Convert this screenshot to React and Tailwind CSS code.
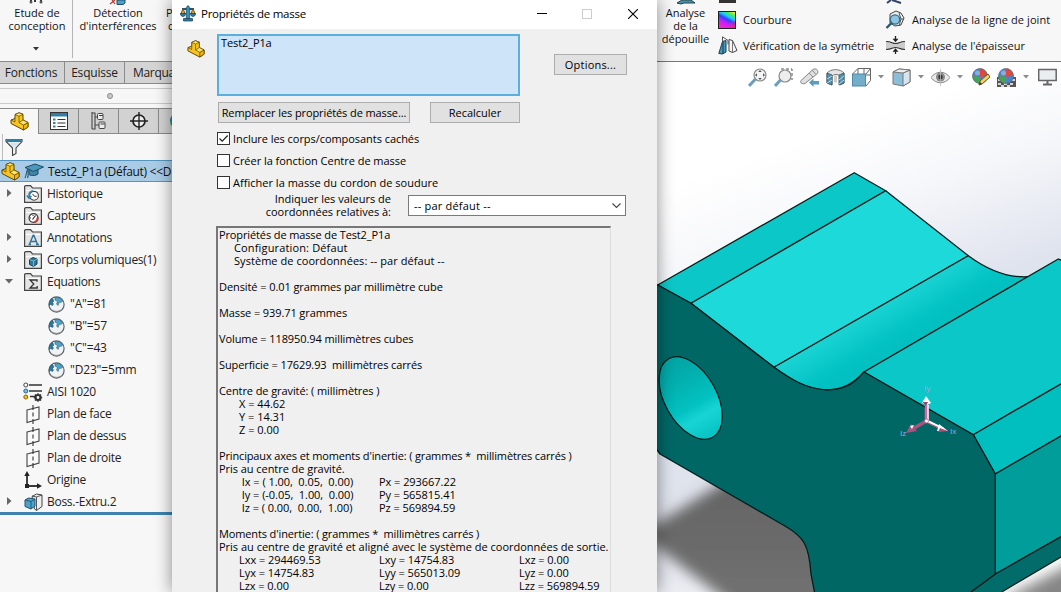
import React from "react";

const Part = ({ className = "w-[19px] h-[19px]" }) => (
  <svg viewBox="0 0 19 19" className={"shrink-0 " + className}>
    <g stroke="#5f4300" strokeWidth="1" strokeLinejoin="round">
      <path d="M1 8 5 6.500V2.500L9 .8l4 1.500V8l5 2.500V15L13.500 18 1 11.500Z" fill="#f6c524" />
      <path d="M13.500 13 18 10.500V15L13.500 18Z" fill="#f3b60c" strokeWidth=".8" />
      <path d="M5 2.500 9 .8l4 1.500L9 4.300Z" fill="#ffe36a" strokeWidth=".7" />
      <path d="M9 10.500 13 8l5 2.500L13.500 13Z" fill="#ffe36a" strokeWidth=".7" />
      <path d="M9 4.300V10.500M1 8l4 2V6.500" fill="none" strokeWidth=".7" />
    </g>
  </svg>
);

const Cap = () => (
  <svg viewBox="0 0 20 18" className="h-[18px] w-[20px]">
    <path d="M5 7v5c0 2 7 2 9 0V7Z" fill="#3f86a8" stroke="#1d4b66" />
    <path d="M1 5.500 11 2l8.500 3L9.500 9.500Z" fill="#4b98bd" stroke="#1d4b66" />
    <path d="M4 7c-2 2-1 5-3 9M4 8c0 3 1 5-.5 8" fill="none" stroke="#2d5f7c" strokeWidth="1.200" />
  </svg>
);

const Folder = ({ children }) => (
  <svg viewBox="0 0 18 18" className="h-[18px] w-[18px]">
    <path d="M.6 17V1.800C.6 1 1 .6 2 .6h4.500L8.500 3H17.400V17.400H.6Z" fill="#e4e4e4" stroke="#444" strokeWidth="1.200" />
    <path d="M2 5.500h14" stroke="#fff" />
    {children}
  </svg>
);

const icons = {
  history: (
    <Folder>
      <circle cx="10" cy="10.800" r="4.400" fill="#fff" stroke="#444" strokeWidth="1.100" />
      <path d="M8.500 9l2 2.300h2.200" fill="none" stroke="#333" />
      <path d="M9 5.800C5.500 6.500 4.500 9 5 12M2.800 10.500l2.300 3 2.400-2.500" fill="none" stroke="#2d82ad" strokeWidth="1.400" />
    </Folder>
  ),
  sensor: (
    <Folder>
      <circle cx="9.500" cy="11" r="4.400" fill="#fff" stroke="#333" strokeWidth="1.200" />
      <path d="M13.500 10.500a4 4 0 0 1-3 4.500" fill="none" stroke="#d6342b" strokeWidth="2.200" />
      <path d="m8.500 12.500 3-4" stroke="#333" strokeWidth="1.200" />
      <path d="M6 11h1M9 8v1" stroke="#333" />
    </Folder>
  ),
  note: (
    <Folder>
      <path d="m5.500 15.300 3.700-9h.6l3.700 9M6.800 12.500h5.300M4.500 15.500h2.500M12 15.500h3" fill="none" stroke="#2f7396" strokeWidth="1.400" />
    </Folder>
  ),
  bodies: (
    <Folder>
      <path d="m9 6.500 4 1.500v5L9.500 15.500l-4-2V8.500Z" fill="#2c789c" stroke="#16445c" />
      <path d="m5.500 8.500 4 1.500L13 8M9.500 10v5.500" fill="none" stroke="#8cc7e2" strokeWidth=".8" />
    </Folder>
  ),
  sigma: (
    <Folder>
      <path d="M13 8.800V7H6l3.800 4L6 15h7.200v-2" fill="none" stroke="#333" strokeWidth="1.300" />
    </Folder>
  ),
  globe: (
    <svg viewBox="0 0 17 17" className="h-[17px] w-[17px]">
      <circle cx="8.500" cy="8.500" r="7.600" fill="#f0f2f3" stroke="#5c646a" strokeWidth="1.200" />
      <path d="M1.200 7C1.800 4.500 3 3 4.500 2.500L6 5 4.500 6.500 5.500 8 4.500 9.500 2.500 8.500 1.300 9.500Z" fill="#2878a0" stroke="#1d4f6b" strokeWidth=".5" />
      <path d="M7 1.500 11.500 1.800l3.300 3.200-1.800 1.500-1.500-.5-1.500 3.500L8.500 8l1-2.500L7 4Z" fill="#4fa5cd" stroke="#1d4f6b" strokeWidth=".5" />
      <path d="M3.500 13.500c2.500 2.500 7.500 2.500 10 0" fill="none" stroke="#888" />
    </svg>
  ),
  material: (
    <svg viewBox="0 0 20 20" className="h-[20px] w-[20px]">
      <path d="M6 3h13M6 9h13M7 14.500h6" stroke="#333" strokeWidth="1.300" />
      <circle cx="2.800" cy="3" r="2" fill="#fff" stroke="#444" />
      <circle cx="2.800" cy="9" r="2" fill="#78c1ec" stroke="#27688c" />
      <circle cx="2.800" cy="15" r="2" fill="#f4c521" stroke="#876500" />
      <circle cx="15" cy="15.500" r="2.500" fill="none" stroke="#333" strokeWidth="2.200" />
      <path d="M15 11.300v1.500M15 18.200v1.500M10.800 15.500h1.500M17.700 15.500h1.500M12 12.500l1 1M17 17.500l1 1M18 12.500l-1 1M13 17.500l-1 1" stroke="#333" strokeWidth="1.400" />
    </svg>
  ),
  plane: (
    <svg viewBox="0 0 14 19" className="h-[19px] w-[14px]">
      <path d="M1 5 13 2v12L1 17.500Z" fill="#fafafa" stroke="#444" strokeWidth="1.100" />
      <path d="M7 0v5M7 7.500v4M7 14v5" stroke="#333" strokeWidth="1.100" />
    </svg>
  ),
  origin: (
    <svg viewBox="0 0 18 18" className="h-[18px] w-[18px]">
      <path d="M3 3v12h12" fill="none" stroke="#3a3a3a" strokeWidth="1.900" />
      <path d="M3 0 5.700 5H.3ZM18 15l-5-2.700v5.400Z" fill="#222" />
      <rect x="1" y="13" width="4" height="4" fill="#222" />
    </svg>
  ),
  extrude: (
    <svg viewBox="0 0 19 18" className="h-[18px] w-[19px]">
      <path d="M8 3.500 12.500 1 18 2v11.500l-5.500 4-2-1.500Z" fill="#eee" stroke="#444" />
      <path d="M12.500 4v13M12.500 4 18 2M12.500 4 8 3" fill="none" stroke="#444" strokeWidth=".9" />
      <path d="M1 7 4.500 5 11 6v7l-4 3-6-2.500Z" fill="#4fa1c8" stroke="#1c5472" />
      <path d="m1 7 6 1.500L11 6M7 8.500V16" fill="none" stroke="#1c5472" strokeWidth=".9" />
    </svg>
  ),
};

const tree = [
  { icon: "history", text: "Historique", arrow: "r" },
  { icon: "sensor", text: "Capteurs" },
  { icon: "note", text: "Annotations", arrow: "r" },
  { icon: "bodies", text: "Corps volumiques(1)", arrow: "r" },
  { icon: "sigma", text: "Equations", arrow: "d" },
  { icon: "globe", text: '"A"=81', deep: true },
  { icon: "globe", text: '"B"=57', deep: true },
  { icon: "globe", text: '"C"=43', deep: true },
  { icon: "globe", text: '"D23"=5mm', deep: true },
  { icon: "material", text: "AISI 1020" },
  { icon: "plane", text: "Plan de face" },
  { icon: "plane", text: "Plan de dessus" },
  { icon: "plane", text: "Plan de droite" },
  { icon: "origin", text: "Origine" },
  { icon: "extrude", text: "Boss.-Extru.2", arrow: "r" },
];

function TreeRow({ icon, text, arrow, deep }) {
  return (
    <div className="flex h-[22px] shrink-0 items-center">
      <div className="flex w-[22px] shrink-0 items-center pb-[3px] pl-[5px]">
        {arrow && (
          <svg viewBox="0 0 8 8" className="h-2 w-2">
            <path d={arrow === "r" ? "M2 0l4.500 4L2 8Z" : "M0 2h8L4 6.500Z"} fill="#666" />
          </svg>
        )}
      </div>
      <div className={deep ? "ml-6 flex w-5 shrink-0 justify-center" : "flex w-[22px] shrink-0 justify-center"}>{icons[icon]}</div>
      <span className={deep ? "ml-1 whitespace-pre tracking-[-0.15px]" : "ml-[3px] whitespace-pre"}>{text}</span>
    </div>
  );
}

function LeftPanel() {
  return (
    <div className="flex w-[172px] shrink-0 flex-col bg-[#f7f7f7]">
      <div className="flex h-[61px] shrink-0 text-center text-[11px] leading-[13px] text-[#111]">
        <div className="flex h-[58px] w-[73px] shrink-0 flex-col items-center border-r border-[#b5b5b5]">
          <svg viewBox="0 0 16 6" className="h-[6px] w-[16px]">
            <path d="M3 0v3M7 0v2M13 0v3" stroke="#333" strokeWidth="2" />
            <circle cx="3" cy="2" r="1.500" fill="#555" /><circle cx="13" cy="2" r="1.500" fill="#555" />
          </svg>
          <div className="pl-[2px]">Etude de</div>
          <div className="pl-[2px]">conception</div>
          <svg viewBox="0 0 6 4" className="mt-[15px] h-1 w-[6px]"><path d="M0 0h6L3 3.500Z" fill="#333" /></svg>
        </div>
        <div className="flex w-[90px] shrink-0 flex-col items-center">
          <svg viewBox="0 0 18 6" className="h-[6px] w-[18px]">
            <path d="m1 4 5-4M3 0l3 4" stroke="#b3392b" strokeWidth="1.200" />
            <path d="M8 0h8v3l-2 1.500H8Z" fill="#4da0c6" stroke="#1c4f6b" />
          </svg>
          <div>Détection</div>
          <div className="whitespace-nowrap">d'interférences</div>
        </div>
        <div className="ml-[3px] pt-[6px] text-left"><div>P</div><div className="pl-[2px]">c</div></div>
      </div>
      <div className="flex h-[23px] shrink-0 border-y border-[#8a8a8a] bg-[#d4d4d4] text-[12px] leading-[21px] tracking-[-0.2px] text-[#222]">
        <div className="w-[65px] shrink-0 border-r border-[#8a8a8a] pr-[2px] text-center">Fonctions</div>
        <div className="w-[60px] shrink-0 border-r border-[#8a8a8a] text-center">Esquisse</div>
        <div className="pl-[8px] tracking-[-0.3px]">Marqua</div>
      </div>
      <div className="mt-1 flex h-4 shrink-0 items-center border-y border-[#cbcbcb] pl-[107px]">
        <div className="h-[6px] w-[6px] rounded-full border border-[#888] bg-[#ccc]" />
      </div>
      <div className="mt-1 flex h-[26px] shrink-0 overflow-hidden border-t border-[#8a8a8a] bg-[#d2d2d2]">
        <div className="flex w-[38px] shrink-0 items-center justify-center bg-[#f7f7f7]"><Part /></div>
        <div className="flex w-[41px] shrink-0 items-center justify-center border-x border-b border-[#8a8a8a]">
          <svg viewBox="0 0 18 18" className="h-[18px] w-[18px]">
            <rect x=".5" y=".5" width="17" height="17" fill="#fff" stroke="#333" />
            <rect x="1" y="1" width="16" height="3.500" fill="#327ea4" />
            <path d="M7.500 7.500h8M7.500 11h8M7.500 14.500h8" stroke="#333" strokeWidth="1.200" />
            <path d="M3 7.500h2.500M3 11h2.500M3 14.500h2.500" stroke="#327ea4" strokeWidth="2" />
          </svg>
        </div>
        <div className="flex w-[40px] shrink-0 items-center justify-center border-r border-b border-[#8a8a8a]">
          <svg viewBox="0 0 15 18" className="h-[18px] w-[15px]">
            <path d="M1 0v17M1 1h3v16H1M4 5h3M4 13h4" fill="none" stroke="#444" strokeWidth="1.100" />
            <rect x="6.500" y="1.500" width="5.500" height="6" rx="1" fill="#eee" stroke="#444" />
            <rect x="8" y="10" width="6" height="6.500" rx="1" fill="#eee" stroke="#444" />
            <path d="M8 3.500h4M9.500 12h4" stroke="#444" />
          </svg>
        </div>
        <div className="flex w-[40px] shrink-0 items-center justify-center border-r border-b border-[#8a8a8a]">
          <svg viewBox="0 0 18 18" className="h-[18px] w-[18px]">
            <circle cx="9" cy="9" r="6" fill="#eee" stroke="#222" strokeWidth="1.700" />
            <path d="M9 0v18M0 9h18" stroke="#222" strokeWidth="1.400" />
          </svg>
        </div>
        <div className="flex w-[40px] shrink-0 items-center border-b border-[#8a8a8a] pl-[11px]">
          <svg viewBox="0 0 16 16" className="h-4 w-4 shrink-0"><circle cx="8" cy="8" r="8" fill="#2e9a62" /><path d="M0 8a8 8 0 0 1 8-8v8Z" fill="#2d7fa5" /></svg>
        </div>
      </div>
      <div className="ml-[2px] flex h-[26px] shrink-0 items-center border-l border-[#bbb] pl-[2px]">
        <svg viewBox="0 0 18 18" className="h-[18px] w-[18px]">
          <path d="M1 1.500h16v2L11 10v5.500L7.500 17.500V10L1 3.500Z" fill="#f2f2f2" stroke="#444" strokeWidth="1.100" />
          <path d="M1.500 1h15v3h-15Z" fill="#2b7ea6" />
          <path d="m3 4.500 6 5 6-5" fill="#cfe5ef" />
        </svg>
      </div>
      <div className="flex h-[22px] shrink-0 items-center border-y border-[#5596c0] bg-[#a9cbe6] pl-[1px] text-[12px] text-[#111]">
        <Part />
        <div className="ml-1 shrink-0"><Cap /></div>
        <span className="ml-[4px] pt-[1px] whitespace-pre tracking-[-0.3px]">{"Test2_P1a (Défaut) <<D"}</span>
      </div>
      <div className="flex h-[330px] shrink-0 flex-col pt-[1px] text-[12px] tracking-[-0.28px] text-[#222]">
        {tree.map((r, i) => <TreeRow key={i} {...r} />)}
      </div>
      <div className="h-[3px] shrink-0 bg-[#3d83ae]" />
    </div>
  );
}

const Line = ({ children, className = "" }) => <div className={"h-[13px] whitespace-pre " + className}>{children}</div>;

function Inertia({ rows }) {
  return rows.map((r, i) => (
    <div key={i} className="grid h-[13px] grid-cols-[140px_140px_100px] whitespace-pre pl-5 tracking-[-0.05px]">
      {r.map((c, j) => <span key={j}>{c}</span>)}
    </div>
  ));
}

function Check({ label, checked, className }) {
  return (
    <div className="flex h-[22px] items-center">
      <div className="mr-[3px] h-[13px] w-[13px] shrink-0 border border-[#333] bg-white">
        {checked && <svg viewBox="0 0 11 11" className="h-[11px] w-[11px]"><path d="m1.500 5.500 2.700 2.700L9.700 2.500" fill="none" stroke="#222" strokeWidth="1.200" /></svg>}
      </div>
      <span className={"whitespace-nowrap " + className}>{label}</span>
    </div>
  );
}

const buttonBox = "flex h-[21px] items-center justify-center border border-[#adadad] bg-[#e1e1e1] whitespace-nowrap";

function Dialog() {
  return (
    <div className="relative z-10 flex w-[485px] shrink-0 flex-col bg-[#f0f0f0] text-[11px] leading-[13px] text-black shadow-[0_0_16px_rgba(0,0,0,0.45)]">
      <div className="flex h-[29px] shrink-0 items-center bg-white pb-[2px] pl-[8px]">
        <svg viewBox="0 0 16 17" className="mr-[5px] h-[17px] w-4">
          <path d="M8 1v13M2 4h12" stroke="#205a7a" strokeWidth="2" />
          <path d="M3 3.500.8 9h4.400ZM13 3.500l-2.200 5.500h4.400Z" fill="#d9a93c" stroke="#604b16" strokeWidth=".9" />
          <path d="M6.300 2.500 8 .5l1.700 2v11H6.300Z" fill="#3f8db2" stroke="#1d506c" strokeWidth=".8" />
          <path d="M.3 8.500h5.400c-.3 4-5.100 4-5.400 0ZM10.300 8.500h5.400c-.3 4-5.100 4-5.400 0ZM3.500 13.500h9V16h-9Z" fill="#2f789d" stroke="#173f54" strokeWidth=".7" />
        </svg>
        <span className="text-[11.5px] tracking-[-0.25px]">Propriétés de masse</span>
        <div className="ml-auto flex items-center pr-[19px]">
          <div className="h-px w-[10px] bg-black" />
          <div className="ml-[35px] h-[10px] w-[10px] border border-[#ccc]" />
          <svg viewBox="0 0 10 10" className="ml-[36px] h-[10px] w-[10px]"><path d="m0 0 10 10M10 0 0 10" stroke="#000" strokeWidth="1.100" /></svg>
        </div>
      </div>
      <div className="flex h-[67px] shrink-0">
        <div className="flex w-[45px] shrink-0 justify-end pt-[11px] pr-[12px]"><Part className="h-[18px] w-[18px]" /></div>
        <div className="mt-[5px] h-[62px] w-[303px] shrink-0 border-2 border-[#5aafdf] bg-[#cee4f8] pl-[2px]"><span className="tracking-[-0.1px]">Test2_P1a</span></div>
        <div className="mt-[25px] ml-[34px] h-[21px]"><div className={buttonBox + " w-[73px] tracking-[0.2px]"}>Options...</div></div>
      </div>
      <div className="mt-[6px] ml-[46px] flex shrink-0">
        <div className={buttonBox + " w-[192px] tracking-[-0.1px]"}>Remplacer les propriétés de masse...</div>
        <div className={buttonBox + " ml-5 w-[90px]"}>Recalculer</div>
      </div>
      <div className="mt-[4px] mb-[1px] ml-[45px] flex h-[66px] shrink-0 flex-col">
        <Check label="Inclure les corps/composants cachés" checked className="tracking-[-0.05px]" />
        <Check label="Créer la fonction Centre de masse" className="tracking-[-0.03px]" />
        <Check label="Afficher la masse du cordon de soudure" className="tracking-[0.02px]" />
      </div>
      <div className="flex h-[32px] shrink-0">
        <div className="-mt-[2px] w-[219px] shrink-0 text-right"><div>Indiquer les valeurs de</div><div>coordonnées relatives à:</div></div>
        <div className="mt-[1px] ml-[17px] flex h-[21px] w-[218px] items-center justify-between border border-[#7a7a7a] bg-white pr-[4px] pl-[5px]">
          <span className="tracking-[0.2px]">-- par défaut --</span>
          <svg viewBox="0 0 9 6" className="h-[6px] w-[9px]"><path d="m.5.5 4 4 4-4" fill="none" stroke="#444" strokeWidth="1.100" /></svg>
        </div>
      </div>
      <div className="ml-[44px] h-[400px] w-[395px] shrink-0 overflow-hidden border-t-2 border-r border-l-2 border-t-[#777] border-r-[#ddd] border-l-[#777] pl-[1px]">
        <Line className="tracking-[-0.12px]">Propriétés de masse de Test2_P1a</Line>
        <Line className="pl-[15px] tracking-[0.15px]">Configuration: Défaut</Line>
        <Line className="pl-[15px] tracking-[0.05px]">Système de coordonnées: -- par défaut --</Line>
        <Line />
        <Line className="tracking-[-0.08px]">Densité = 0.01 grammes par millimètre cube</Line>
        <Line />
        <Line className="tracking-[-0.1px]">Masse = 939.71 grammes</Line>
        <Line />
        <Line className="tracking-[-0.09px]">Volume = 118950.94 millimètres cubes</Line>
        <Line />
        <Line className="tracking-[-0.11px]">{"Superficie = 17629.93  millimètres carrés"}</Line>
        <Line />
        <Line className="tracking-[-0.09px]">Centre de gravité: ( millimètres )</Line>
        <Line className="pl-5">X = 44.62</Line>
        <Line className="pl-5">Y = 14.31</Line>
        <Line className="pl-5">Z = 0.00</Line>
        <Line />
        <Line className="tracking-[-0.15px]">{"Principaux axes et moments d'inertie: ( grammes *  millimètres carrés )"}</Line>
        <Line className="tracking-[-0.05px]">Pris au centre de gravité.</Line>
        <Inertia rows={[
          [" Ix = ( 1.00,  0.05,  0.00)", "Px = 293667.22"],
          [" Iy = (-0.05,  1.00,  0.00)", "Py = 565815.41"],
          [" Iz = ( 0.00,  0.00,  1.00)", "Pz = 569894.59"],
        ]} />
        <Line />
        <Line className="tracking-[-0.13px]">{"Moments d'inertie: ( grammes *  millimètres carrés )"}</Line>
        <Line className="tracking-[-0.01px]">Pris au centre de gravité et aligné avec le système de coordonnées de sortie.</Line>
        <Inertia rows={[
          ["Lxx = 294469.53", "Lxy = 14754.83", "Lxz = 0.00"],
          ["Lyx = 14754.83", "Lyy = 565013.09", "Lyz = 0.00"],
          ["Lzx = 0.00", "Lzy = 0.00", "Lzz = 569894.59"],
        ]} />
      </div>
    </div>
  );
}

const Tool = ({ children }) => (
  <div className="flex w-[26px] shrink-0 items-center justify-center">
    <svg viewBox="0 0 19 19" className="h-[19px] w-[19px]">{children}</svg>
  </div>
);

const Drop = () => (
  <div className="flex w-[13px] shrink-0 items-center justify-center">
    <svg viewBox="0 0 6 4" className="h-1 w-[6px]"><path d="M0 0h6L3 3.500Z" fill="#8c8c8c" /></svg>
  </div>
);

const Ball = () => (
  <g>
    <circle cx="9" cy="8" r="7.500" fill="#4b83c9" />
    <path d="M9 .5A7.500 7.500 0 0 1 16.500 8L9 9Z" fill="#dd4a3c" />
    <path d="M1.500 8 9 9v6.500A7.500 7.500 0 0 1 1.500 8Z" fill="#44a64b" />
    <path d="m9 9 7.500-1A7.500 7.500 0 0 1 9 15.500Z" fill="#4b83c9" />
    <circle cx="6.500" cy="5" r="2.500" fill="#fff" opacity=".35" />
    <circle cx="9" cy="8" r="7.500" fill="none" stroke="#667" strokeWidth=".7" />
  </g>
);

function Ribbon() {
  return (
    <div className="flex h-[62px] shrink-0 border-b border-[#777] bg-[#f7f7f7] text-[11px] leading-[13px] text-[#111]">
      <div className="flex w-[58px] shrink-0 flex-col items-center pr-[1px] text-center">
        <svg viewBox="0 0 20 6" className="h-[6px] w-5"><path d="M1 3 6 0h9l4 3H8L5 4Z" fill="#4b8fae" stroke="#244" /></svg>
        <div>Analyse<br />de la<br />dépouille</div>
      </div>
      <div className="flex w-[169px] shrink-0 flex-col pl-[3px]">
        <div className="h-[6px] shrink-0 pl-[1px]"><div className="h-[3px] w-[17px] bg-[#333]" /></div>
        <div className="flex h-[26px] items-center">
          <svg viewBox="0 0 18 18" className="mt-[1px] h-[18px] w-[18px]">
            <defs>
              <linearGradient id="rainbow" x1="0.850" y1="0" x2="0.300" y2="1">
                <stop offset="0" stopColor="#f4e040" /><stop offset=".18" stopColor="#40ee60" /><stop offset=".34" stopColor="#20c8ff" />
                <stop offset=".5" stopColor="#3040ff" /><stop offset=".68" stopColor="#c020ff" /><stop offset="1" stopColor="#ff20d0" />
              </linearGradient>
              <radialGradient id="rainbowCorner" cx="1" cy="1" r=".55">
                <stop offset="0" stopColor="#ff2040" /><stop offset="1" stopColor="#ff20a0" stopOpacity="0" />
              </radialGradient>
            </defs>
            <rect x=".5" y=".5" width="17" height="17" fill="url(#rainbow)" />
            <rect x=".5" y=".5" width="17" height="17" fill="url(#rainbowCorner)" stroke="#222" />
          </svg>
          <span className="ml-[7px]">Courbure</span>
        </div>
        <div className="flex h-[26px] items-center">
          <svg viewBox="0 0 20 19" className="h-[19px] w-5">
            <path d="M4.500 5.500V.8L10 4.500v4" fill="none" stroke="#555" />
            <path d="m.8 17.500 3.700-12L8 4.500V16l-3.500 2Z" fill="#4796bb" stroke="#173f56" />
            <path d="M5 6v12" stroke="#173f56" />
            <path d="m19 14.500-4.500-10-3.500-1V15l3.500 1.500Z" fill="#f7f7f7" stroke="#444" />
            <path d="M14.500 4.500v12" stroke="#666" strokeWidth=".9" />
          </svg>
          <span className="ml-[5px] whitespace-nowrap tracking-[-0.06px]">Vérification de la symétrie</span>
        </div>
      </div>
      <div className="flex w-[177px] shrink-0 flex-col">
        <div className="h-[6px] shrink-0 pl-[2px]"><svg viewBox="0 0 18 5" className="h-[5px] w-[18px]"><path d="M1 3 5 0M6 0l9 3" stroke="#346" strokeWidth="2" /></svg></div>
        <div className="flex h-[26px] items-center pl-[1px]">
          <svg viewBox="0 0 20 19" className="h-[19px] w-5">
            <path d="m5 4 6-3 5 2 3 5-3 7-6 1-5-3Z" fill="#eee" stroke="#444" />
            <path d="m14 3 2 6-2 7M16 9h3" fill="none" stroke="#555" />
            <circle cx="10" cy="9.500" r="4.700" fill="#8cc5e2" stroke="#346a86" strokeWidth="1.300" />
            <path d="m6.500 13-5 5" stroke="#235a77" strokeWidth="2.400" />
          </svg>
          <span className="ml-[7px] whitespace-nowrap tracking-[0.09px]">Analyse de la ligne de joint</span>
        </div>
        <div className="flex h-[26px] items-center pl-[2px]">
          <svg viewBox="0 0 19 18" className="h-[18px] w-[19px]">
            <path d="M0 5.500c6 0 6 2 9.500 2s4-2 9.500-2v8c-6 0-6-2-9.500-2s-4 2-9.500 2Z" fill="#ccc" />
            <path d="M0 5.500c6 0 6 2 9.500 2s4-2 9.500-2M0 13.500c6 0 6-2 9.500-2s4 2 9.500 2" fill="none" stroke="#333" strokeWidth="1.100" />
            <path d="M9.500 0v4M9.500 18v-4" stroke="#222" strokeWidth="1.300" />
            <path d="m6.500 2.800 3 3.500 3-3.500ZM6.500 15.700l3-3.500 3 3.500Z" fill="#222" />
          </svg>
          <span className="ml-[7px] whitespace-nowrap">Analyse de l'épaisseur</span>
        </div>
      </div>
    </div>
  );
}

function ViewTools() {
  return (
    <div className="flex h-[30px] shrink-0 pl-[87px]">
      <Tool>
        <circle cx="12" cy="7" r="6" fill="#f5f5f5" stroke="#888" strokeWidth="1.200" />
        <path d="m7.500 11-6.500 7" stroke="#6d9fb8" strokeWidth="3" />
        <path d="M12 2l1.800 2h-3.600ZM12 12l1.800-2h-3.600ZM7 7l2-1.800v3.600ZM17 7l-2-1.800v3.600Z" fill="#555" />
      </Tool>
      <Tool>
        <path d="M7 1h11v11" fill="none" stroke="#555" strokeDasharray="3 2" />
        <circle cx="11" cy="8" r="6" fill="#eee" stroke="#888" strokeWidth="1.200" />
        <path d="m6.500 12-5.500 6" stroke="#6d9fb8" strokeWidth="3" />
      </Tool>
      <Tool>
        <path d="m1 12.500 12-11c3-2 6 1 4.500 4L5 15.500c-3 1-5.500-1-4-3Z" fill="#e0e0e0" stroke="#888" />
        <path d="m9 5 4 4M12 2l4 4.500" stroke="#888" /><path d="M9 14.500 13.500 10.500v2.500H19v3.500h-5.500v2.500Z" fill="#5c9cbd" />
      </Tool>
      <Tool>
        <path d="M1 5c4-4.500 13-4.500 17 0v10l-4 2V8c-2-2-6-2-8 0v9l-5-2Z" fill="#e5e5e5" stroke="#777" />
        <path d="M1 5l5 2v10l-5-2ZM13 7l5-2v10l-5 2Z" fill="#4f93b3" stroke="#47616d" />
        <path d="M8 7.500h3v7H8Z" fill="#ccc" />
        <path d="m1 11 5-3M1 15l5-3M13 12l5-4M13 16l5-4" stroke="#b8dce9" />
      </Tool>
      <Tool>
        <path d="M6 .5h12.500v12L14 18M.5 6 6 .5v12M14 6l4.500-5.500M12 .5v13M6 7h12" fill="none" stroke="#666" />
        <rect x=".5" y="6" width="13" height="12" fill="#75aeca" stroke="#4b8aab" />
      </Tool>
      <Drop /><div className="w-px shrink-0" />
      <Tool>
        <path d="m1 4 6-3 11 1v12l-7 4-10-2Z" fill="#8dbed7" stroke="#777" />
        <path d="m11 5 7-3v12l-7 4Z" fill="#d7e4eb" stroke="#777" />
        <path d="m1 4 10 1 7-3L7 1Z" fill="#eee" stroke="#777" />
      </Tool>
      <Drop />
      <Tool>
        <path d="M0 9.500c5-7 14-7 19 0-5 7-14 7-19 0Z" fill="#e9e9e9" stroke="#888" />
        <circle cx="9.500" cy="9" r="4.500" fill="#888" /><circle cx="9.500" cy="9" r="2.200" fill="#333" />
        <path d="M9.500 1v17" stroke="#bbb" strokeWidth=".8" />
      </Tool>
      <Drop /><div className="w-px shrink-0" />
      <Tool>
        <Ball />
        <path d="m8 17 1-4 8-7 2 3-8 7Z" fill="#f4d35e" stroke="#665530" /><path d="m8 17 1-3 2 2Z" fill="#333" />
      </Tool>
      <Tool>
        <path d="M0 9h19v10H0Z" fill="#555" /><path d="M1 16h3M7 16h3M13 16h3M4 18h3M10 18h3M1 12h3M15 12h3" stroke="#fff" strokeWidth="1.500" />
        <Ball />
      </Tool>
      <Drop /><div className="w-[2px] shrink-0" />
      <Tool>
        <rect x=".7" y="1.500" width="17.500" height="11" fill="#e9eef1" stroke="#666" strokeWidth="1.500" />
        <path d="M9.500 13v3M5 16.500h9" stroke="#666" strokeWidth="2" />
      </Tool>
    </div>
  );
}

function Model() {
  return (
    <svg viewBox="657 92 404 500" className="block h-[500px] w-[404px] shrink-0">
      <defs>
        <linearGradient id="groove" gradientUnits="userSpaceOnUse" x1="860" y1="316" x2="896" y2="376">
          <stop offset="0" stopColor="#1bd4d4" /><stop offset=".5" stopColor="#02c2c3" /><stop offset="1" stopColor="#02bcbc" />
        </linearGradient>
        <linearGradient id="bore" gradientUnits="userSpaceOnUse" x1="670" y1="362" x2="711" y2="434" gradientTransform="rotate(-60.600 690.700 398)">
          <stop offset="0" stopColor="#02a5a4" /><stop offset=".3" stopColor="#02b2b1" /><stop offset=".6" stopColor="#02c2c1" /><stop offset=".76" stopColor="#18d5d4" /><stop offset="1" stopColor="#08c4c4" />
        </linearGradient>
        <linearGradient id="floor" x1="0" y1="0" x2="0" y2="1"><stop offset="0" stopColor="#626262" /><stop offset="1" stopColor="#777" /></linearGradient>
        <filter id="soft" x="-20%" y="-20%" width="140%" height="140%"><feGaussianBlur stdDeviation="7" /></filter>
      </defs>
      <path d="M640 534 740 472 900 520V650H790Z" fill="url(#floor)" filter="url(#soft)" />
      <path d="M1000 600 1075 562V610Z" fill="#858585" filter="url(#soft)" />
      <g stroke="#071c1c" strokeWidth="1.300" strokeLinejoin="round">
        <path d="M657.700 285 854.300 172.700 885.700 190.700 691 303.300Z" fill="#0cc7c8" />
        <path d="M691 303.300 885.700 190.700 968.300 255.700 774 367.300Z" fill="#1ed9d9" />
        <path d="M774 367.300 968.300 255.700C985 268 1005 278 1028 276.700L864 372C851 387 838 390 826.700 390 805 389 789 378 774 367.300Z" fill="url(#groove)" />
        <path d="M864 372 1058.300 259 1066 262V381L973.300 434.700Z" fill="#0cc7c8" />
        <path d="M973.300 434.700 1066 381V433L995.300 474Z" fill="#02bfbf" />
        <path d="M995.300 474 1066 433V534L995.300 574Z" fill="#019d9b" />
        <path d="M995.300 574 1066 534V554L1001.700 592 990 600H960Z" fill="#016c6a" />
        <path d="M655 284 657.700 285 691 303.300 774 367.300C789 378 805 389 826.700 390 838 390 849 387 857 379.300L864 372 973.300 434.700 995.300 474V574L960 600H816L811 574C809 545 804 537 785 526L660 454 655 447Z" fill="#016765" />
        <ellipse cx="690.700" cy="398" rx="45" ry="26" transform="rotate(60.600 690.700 398)" fill="url(#bore)" />
      </g>
      <path d="M926.500 421V402" stroke="#e064a4" strokeWidth="3.500" /><path d="M928 421V405" stroke="#fff" strokeWidth="1.500" />
      <path d="m926.500 421-16 9" stroke="#a9527f" strokeWidth="3.500" />
      <path d="m927 421 16 8" stroke="#fff" strokeWidth="3" /><path d="m928 423 13 6" stroke="#a9527f" strokeWidth="1.300" />
      <path d="m926 396 5 7-4 2-5-2Z" fill="#fff" /><path d="m922.500 402 3.500 4 2-4Z" fill="#94476d" />
      <path d="m906 433 5-9 6 7Z" fill="#a9527f" /><path d="m910 426 4-1-2 4Z" fill="#fff" />
      <path d="m948 431-9-7-2 7Z" fill="#fff" /><path d="m948 431-8-3-2 4Z" fill="#a9527f" />
      <circle cx="926.500" cy="421" r="2" fill="#fff" stroke="#a9527f" strokeWidth=".7" />
      <g fill="#b49ad0" fontSize="8" fontFamily="Liberation Sans, sans-serif">
        <text x="924" y="391">Iy</text><text x="900" y="436">Iz</text><text x="950" y="434">Ix</text>
      </g>
    </svg>
  );
}

export default function App() {
  return (
    <div className="flex h-[592px] w-[1061px] overflow-hidden bg-white font-['Open_Sans','Noto_Sans',sans-serif]">
      <LeftPanel />
      <Dialog />
      <div className="flex w-[404px] shrink-0 flex-col bg-[linear-gradient(160deg,#ffffff_26%,#f6f7fa_38%,#dfe3ee_54%,#e0e3ec_75%,#ffffff_92%)]">
        <Ribbon />
        <ViewTools />
        <Model />
      </div>
    </div>
  );
}
